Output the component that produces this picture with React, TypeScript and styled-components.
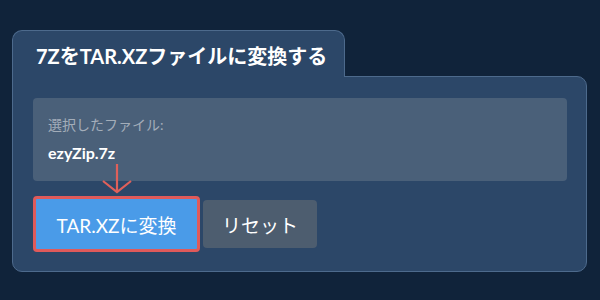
import React from 'react';
import styled, { createGlobalStyle } from 'styled-components';

const GlobalStyle = createGlobalStyle`
  html, body {
    margin: 0;
    padding: 0;
    background: #10233a;
  }
  body {
    font-family: Lato, 'Noto Sans CJK JP', sans-serif;
    color: #fff;
  }
`;

const Page = styled.div`
  width: 600px;
  height: 300px;
  padding: 30px 0 0 12px;
  box-sizing: border-box;
`;

const Tab = styled.div`
  position: relative;
  z-index: 1;
  width: 333px;
  height: 47px;
  box-sizing: border-box;
  margin-bottom: -1px;
  padding: 13px 0 0 23px;
  background: #2c4768;
  border: 1px solid #4d6a8c;
  border-bottom: none;
  border-radius: 10px 10px 0 0;
  font-size: 20px;
  font-weight: 700;
  line-height: 24px;
`;

const Panel = styled.div`
  position: relative;
  width: 575px;
  height: 196px;
  box-sizing: border-box;
  padding: 21px 19px 0 20px;
  background: #2c4768;
  border: 1px solid #4d6a8c;
  border-radius: 0 10px 10px 10px;
`;

const FileBox = styled.div`
  height: 83px;
  box-sizing: border-box;
  padding: 19px 15px 0;
  background: #4a6079;
  border-radius: 4px;
`;

const FileLabel = styled.div`
  font-size: 14px;
  line-height: 16px;
  color: #a3adb9;
`;

const FileName = styled.div`
  margin-top: 10px;
  font-size: 16px;
  font-weight: 700;
  line-height: 20px;
  color: #fff;
`;

const Actions = styled.div`
  display: flex;
  align-items: center;
  gap: 3px;
  margin-top: 15px;
`;

const Button = styled.button<{ $variant: 'primary' | 'secondary' }>`
  font-family: Lato, 'Noto Sans CJK JP', sans-serif;
  font-size: 19px;
  color: #fff;
  border-radius: 4px;
  cursor: pointer;
  box-sizing: border-box;
  padding: 0;
  ${({ $variant }) =>
    $variant === 'primary'
      ? `
    width: 167px;
    height: 56px;
    background: #4a9be8;
    border: 3px solid #e05a5a;
  `
      : `
    width: 114px;
    height: 48px;
    background: #4d5d6f;
    border: none;
  `}
`;

const Arrow = styled.svg`
  position: absolute;
  left: 80px;
  top: 85px;
  pointer-events: none;
`;

export default function App() {
  return (
    <>
      <GlobalStyle />
      <Page>
        <Tab>7ZをTAR.XZファイルに変換する</Tab>
        <Panel>
          <FileBox>
            <FileLabel>選択したファイル:</FileLabel>
            <FileName>ezyZip.7z</FileName>
          </FileBox>
          <Actions>
            <Button $variant="primary">TAR.XZに変換</Button>
            <Button $variant="secondary">リセット</Button>
          </Actions>
          <Arrow width="40" height="40" viewBox="0 0 40 40">
            <path d="M24 2 V29 M10 19 L24 30 L38 19" fill="none" stroke="#e0605a" strokeWidth="2.2" />
          </Arrow>
        </Panel>
      </Page>
    </>
  );
}
